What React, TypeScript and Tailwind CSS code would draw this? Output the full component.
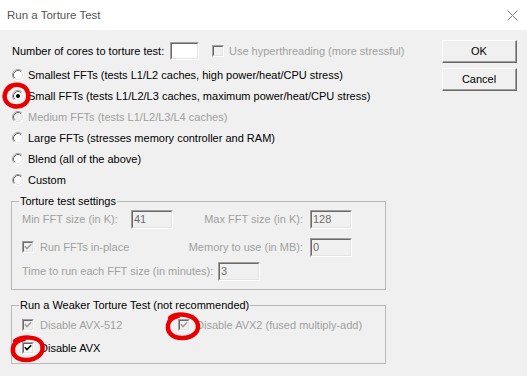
import React from "react";

const font = "font-['Liberation_Sans',Arial,sans-serif]";

function Radio({ checked = false, disabled = false }: { checked?: boolean; disabled?: boolean }) {
  return (
    <svg width="12" height="12" viewBox="0 0 12 12" className="shrink-0">
      <circle cx="6" cy="6" r="5" fill={disabled ? "#f0f0f0" : "#ffffff"} />
      <path d="M2.11 9.89 A5.5 5.5 0 0 1 9.89 2.11" fill="none" stroke="#a0a0a0" />
      <path d="M9.89 2.11 A5.5 5.5 0 0 1 2.11 9.89" fill="none" stroke="#ffffff" />
      <path d="M2.82 9.18 A4.5 4.5 0 0 1 9.18 2.82" fill="none" stroke="#696969" />
      <path d="M9.18 2.82 A4.5 4.5 0 0 1 2.82 9.18" fill="none" stroke="#e3e3e3" />
      {checked && <circle cx="6" cy="6" r="2" fill="#000" />}
    </svg>
  );
}

function Check({ checked = false, disabled = false }: { checked?: boolean; disabled?: boolean }) {
  return (
    <span className="flex h-[12px] w-[12px] shrink-0 border-l border-t border-b border-r border-l-[#a0a0a0] border-t-[#a0a0a0] border-b-white border-r-white">
      <span
        className={`flex flex-1 items-center justify-center border-l border-t border-b border-r border-l-[#696969] border-t-[#696969] border-b-[#e3e3e3] border-r-[#e3e3e3] ${
          disabled ? "bg-[#f0f0f0]" : "bg-white"
        }`}
      >
        {checked && (
          <svg width="8" height="8" viewBox="0 0 8 8">
            <path d="M0.8 3.2 L3 5.6 L7.2 1.2" fill="none" stroke={disabled ? "#a0a0a0" : "#000"} strokeWidth="1.6" />
          </svg>
        )}
      </span>
    </span>
  );
}

function Field({ value = "", disabled = false, w = "w-[42px]", h = "h-[19px]" }: { value?: string; disabled?: boolean; w?: string; h?: string }) {
  return (
    <span className={`flex ${w} ${h} shrink-0 border-l border-t border-b border-r border-l-[#a0a0a0] border-t-[#a0a0a0] border-b-white border-r-white`}>
      <span
        className={`flex flex-1 items-center border-l border-t border-b border-r border-l-[#696969] border-t-[#696969] border-b-[#e3e3e3] border-r-[#e3e3e3] pl-[1px] text-[11px] leading-none ${
          disabled ? "bg-[#f0f0f0] text-[#6d6d6d]" : "bg-white text-black"
        }`}
      >
        {value}
      </span>
    </span>
  );
}

function Button({ label }: { label: string }) {
  return (
    <button className="flex h-[23px] w-[75px] border-l border-t border-b border-r border-l-white border-t-white border-b-[#696969] border-r-[#696969] bg-[#f0f0f0]">
      <span className="flex flex-1 items-center justify-center border-b border-r border-b-[#a0a0a0] border-r-[#a0a0a0] text-[11px] text-black">
        {label}
      </span>
    </button>
  );
}

function RadioRow({ label, checked, disabled }: { label: string; checked?: boolean; disabled?: boolean }) {
  return (
    <div className="flex h-[21px] items-center gap-[4px] pl-[1px]">
      <Radio checked={checked} disabled={disabled} />
      <span className={disabled ? "text-[#a0a0a0]" : "text-black"}>{label}</span>
    </div>
  );
}

export default function App() {
  const dim = "text-[#a0a0a0]";
  return (
    <div className={`relative h-[376px] w-[527px] overflow-hidden bg-[#f0f0f0] text-[11px] leading-[14px] ${font}`}>
      {/* title bar */}
      <div className="flex h-[30px] items-center justify-between bg-white pl-[7px] pr-[9px]">
        <span className="text-[11.5px] text-[#555]">Run a Torture Test</span>
        <svg width="11" height="11" viewBox="0 0 11 11">
          <path d="M0.5 0.5 L10.5 10.5 M10.5 0.5 L0.5 10.5" stroke="#7a7a7a" strokeWidth="1" />
        </svg>
      </div>

      <div className="flex whitespace-nowrap">
        <div className="flex w-[430px] flex-col pl-[11px] pt-[12px]">
          <div className="flex h-[18px] items-center">
            <span className="w-[159px] pl-[1px]">Number of cores to torture test:</span>
            <Field w="w-[29px]" h="h-[18px]" />
            <span className="ml-[13px]">
              <Check disabled />
            </span>
            <span className={`ml-[5px] ${dim}`}>Use hyperthreading (more stressful)</span>
          </div>

          <div className="mt-[4px] flex flex-col">
            <RadioRow label="Smallest FFTs (tests L1/L2 caches, high power/heat/CPU stress)" />
            <RadioRow label="Small FFTs (tests L1/L2/L3 caches, maximum power/heat/CPU stress)" checked />
            <RadioRow label="Medium FFTs (tests L1/L2/L3/L4 caches)" disabled />
            <RadioRow label="Large FFTs (stresses memory controller and RAM)" />
            <RadioRow label="Blend (all of the above)" />
            <RadioRow label="Custom" />
          </div>

          <fieldset className="mt-[4px] w-[375px] border border-[#b9b9b9] pb-[8px]">
            <legend className="ml-[7px] px-[1px]">Torture test settings</legend>
            <div className={`mt-[1px] flex h-[20px] items-center pl-[10px] ${dim}`}>
              <span className="w-[109px]">Min FFT size (in K):</span>
              <Field value="41" disabled />
              <span className="w-[137px] pr-[7px] text-right">Max FFT size (in K):</span>
              <Field value="128" disabled />
            </div>
            <div className={`mt-[8px] flex h-[20px] items-center pl-[10px] ${dim}`}>
              <span className="flex w-[151px] items-center gap-[6px]">
                <Check checked disabled />
                Run FFTs in-place
              </span>
              <span className="w-[137px] pr-[7px] text-right">Memory to use (in MB):</span>
              <Field value="0" disabled />
            </div>
            <div className={`mt-[4px] flex h-[20px] items-center pl-[10px] ${dim}`}>
              <span className="w-[196px]">Time to run each FFT size (in minutes):</span>
              <Field value="3" disabled />
            </div>
          </fieldset>

          <fieldset className="mt-[8px] w-[375px] border border-[#b9b9b9] pb-[6px]">
            <legend className="ml-[7px] px-[1px]">Run a Weaker Torture Test (not recommended)</legend>
            <div className="mt-[4px] flex h-[18px] items-center pl-[10px]">
              <span className={`flex w-[156px] items-center gap-[6px] ${dim}`}>
                <Check checked disabled />
                Disable AVX-512
              </span>
              <span className={`flex items-center gap-[6px] ${dim}`}>
                <Check checked disabled />
                Disable AVX2 (fused multiply-add)
              </span>
            </div>
            <div className="mt-[5px] flex h-[18px] items-center gap-[6px] pl-[10px]">
              <Check checked />
              Disable AVX
            </div>
          </fieldset>
        </div>

        <div className="ml-auto mr-[10px] flex flex-col gap-[5px] pt-[10px]">
          <Button label="OK" />
          <Button label="Cancel" />
        </div>
      </div>

      {/* red annotation marks */}
      <svg className="pointer-events-none absolute inset-0" width="527" height="376" viewBox="0 0 527 376">
        <g fill="none" stroke="#e80000" strokeWidth="4.5" strokeLinecap="round">
          <path d="M8 89 C14 82 26 84 28 93 C30 103 22 108 13 106 C5 104 3 97 6 91 C8 87 12 85 15 85" />
          <path d="M170 318 C176 313 192 313 197 322 C201 331 193 338 182 338 C172 338 167 332 168 325 C169 320 172 317 178 316" />
          <path d="M15 341 C22 336 38 336 42 344 C45 353 37 360 26 360 C16 360 12 354 13 348 C14 343 18 340 24 339" />
        </g>
      </svg>
    </div>
  );
}
